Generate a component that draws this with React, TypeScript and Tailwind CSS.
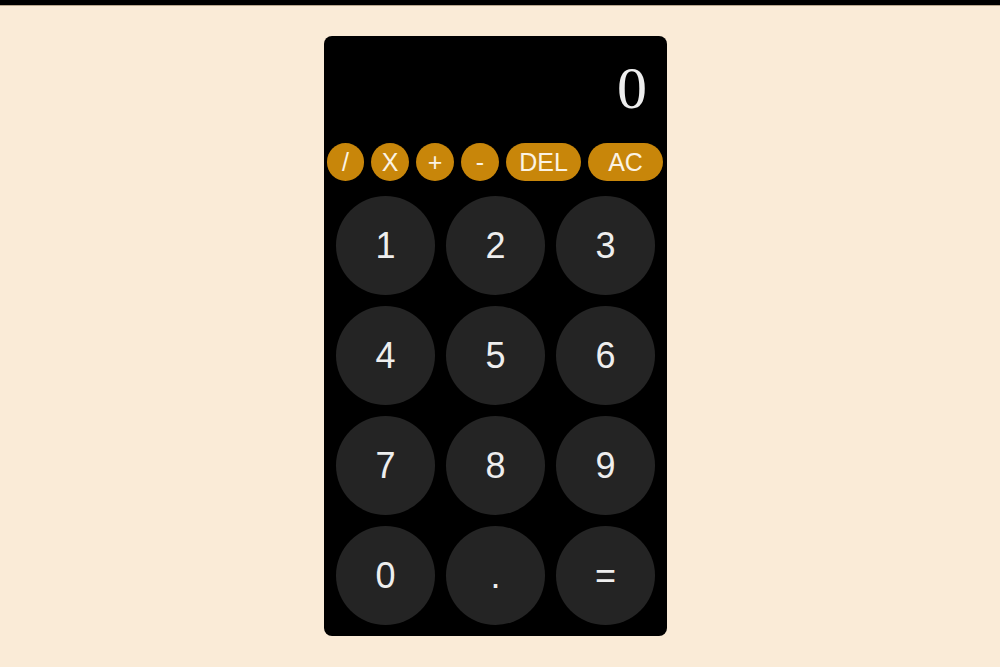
export default function App() {
  const ops = [
    { label: '/', w: 'w-[37px]' },
    { label: 'X', w: 'w-[38px]' },
    { label: '+', w: 'w-[38px]' },
    { label: '-', w: 'w-[38px]' },
    { label: 'DEL', w: 'w-[75px]' },
    { label: 'AC', w: 'w-[75px]' },
  ]
  const keys = ['1', '2', '3', '4', '5', '6', '7', '8', '9', '0', '.', '=']

  return (
    <div className="min-h-screen bg-[#faebd7] font-['Liberation_Sans',Arial,sans-serif]">
      {/* Top bar */}
      <div className="h-[5px] bg-black border-b border-[#b9a78e] box-content" />

      {/* Calculator */}
      <div className="ml-[324px] mt-[30px] w-[343px] h-[600px] bg-black rounded-[8px] pt-[22px]">
        <div className="h-[60px] pr-[20px] text-right text-[60px] leading-none text-[#eeeeee] font-['Liberation_Serif','Times_New_Roman',serif]">
          0
        </div>

        <div className="mt-[25px] pl-[3px] flex gap-[7px]">
          {ops.map((op) => (
            <button
              key={op.label}
              className={`${op.w} h-[38px] rounded-full bg-[#c8860a] text-[25px] leading-none text-[#fbf3e4] flex items-center justify-center`}
            >
              {op.label}
            </button>
          ))}
        </div>

        <div className="mt-[15px] px-[12px] grid grid-cols-3 gap-[11px]">
          {keys.map((k) => (
            <button
              key={k}
              className="w-[99px] h-[99px] rounded-full bg-[#242424] text-[36px] leading-none text-[#eeeeee] flex items-center justify-center"
            >
              {k}
            </button>
          ))}
        </div>
      </div>
    </div>
  )
}
